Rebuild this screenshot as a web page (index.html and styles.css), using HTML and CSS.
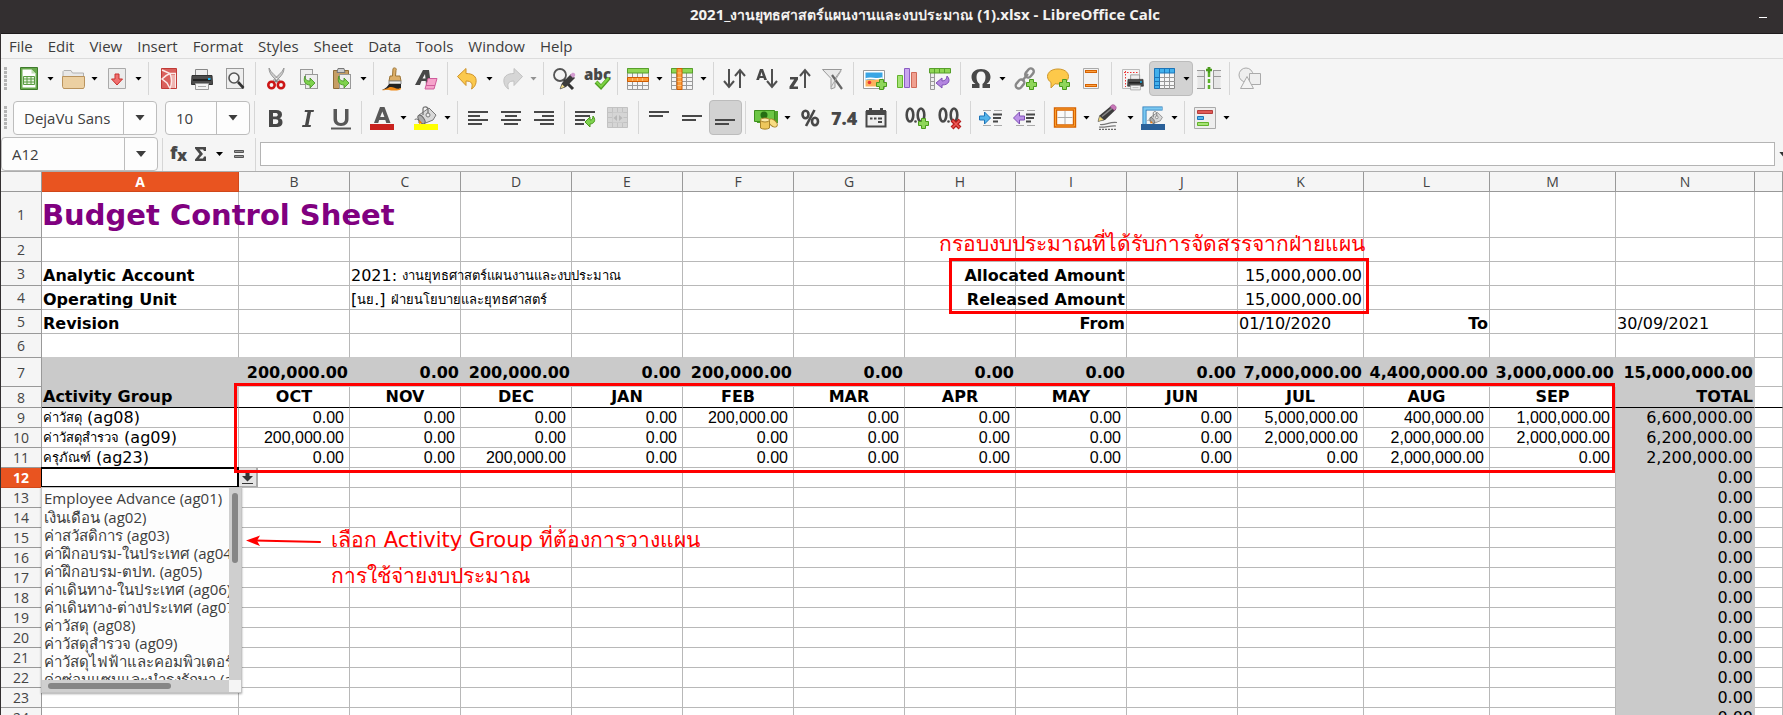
FILE: index.html
```html
<!DOCTYPE html>
<html lang="th">
<head>
<meta charset="utf-8">
<title>2021_งานยุทธศาสตร์แผนงานและงบประมาณ (1).xlsx - LibreOffice Calc</title>
<link rel="stylesheet" href="styles.css">
</head>
<body>
<div class="window">
  <header class="titlebar">
    <h1 class="title">2021_<span class="thai">งานยุทธศาสตร์แผนงานและงบประมาณ</span> (1).xlsx - LibreOffice Calc</h1>
    <button class="minimize" aria-label="Minimize"></button>
  </header>

  <nav class="menubar">
    <button>File</button><button>Edit</button><button>View</button><button>Insert</button><button>Format</button><button>Styles</button><button>Sheet</button><button>Data</button><button>Tools</button><button>Window</button><button>Help</button>
  </nav>

  <div class="toolbar" id="standard-bar" role="toolbar" aria-label="Standard"></div>

  <div class="toolbar" role="toolbar" aria-label="Formatting">
    <span class="grip"></span>
    <span class="combo combo-font"><select aria-label="Font name"><option>DejaVu Sans</option></select><i class="combo-arrow"></i></span>
    <span class="combo combo-size"><select aria-label="Font size"><option>10</option></select><i class="combo-arrow"></i></span>
    <span class="tools" id="format-bar"></span>
  </div>

  <div class="formulabar">
    <span class="combo combo-name"><input aria-label="Name box" value="A12"><i class="combo-arrow"></i></span>
    <span class="sep"></span>
    <button class="fn" aria-label="Function wizard"><svg width="22" height="22" viewBox="0 0 22 22"><text x="1" y="16" class="glyph" font-size="18">f</text><text x="8" y="18" class="glyph" font-size="16">x</text></svg></button>
    <button class="fn fn-menu" aria-label="Select function"><svg width="20" height="22" viewBox="0 0 20 22"><path d="M4 4h11v4h-2l-1-1.500H8.500L12 11l-4 4.500h4l1-2h2V18H4v-1.500L8.500 11 4 5.500z" fill="#484848"/></svg><i class="caret"></i></button>
    <button class="fn" aria-label="Formula"><svg width="14" height="22" viewBox="0 0 14 22"><path d="M2.500 7.500h9v2h-9zM2.500 12.500h9v2h-9z" fill="#999" stroke="#555"/></svg></button>
    <span class="sep"></span>
    <input class="formula-input" aria-label="Input line">
    <button class="expand" aria-label="Expand formula bar"></button>
  </div>

  <main class="sheet">
    <table class="grid" id="grid"></table>

    <div class="cell-cursor"></div>
    <button class="cell-drop" aria-label="Show selection list"><svg width="19" height="19" viewBox="0 0 19 19"><path d="M6.500 2h4v6H14l-5.500 5.500L3 8h3.500z" fill="#333"/><path d="M3 15.500h11" stroke="#333"/></svg></button>
    <div class="picker">
      <select size="11" aria-label="Activity Group">
        <option>Employee Advance (ag01)</option>
        <option>เงินเดือน (ag02)</option>
        <option>ค่าสวัสดิการ (ag03)</option>
        <option>ค่าฝึกอบรม-ในประเทศ (ag04)</option>
        <option>ค่าฝึกอบรม-ตปท. (ag05)</option>
        <option>ค่าเดินทาง-ในประเทศ (ag06)</option>
        <option>ค่าเดินทาง-ต่างประเทศ (ag07)</option>
        <option>ค่าวัสดุ (ag08)</option>
        <option>ค่าวัสดุสำรวจ (ag09)</option>
        <option>ค่าวัสดุไฟฟ้าและคอมพิวเตอร์ (ag10)</option>
        <option>ค่าซ่อมแซมและบำรุงรักษา (ag11)</option>
      </select>
      <span class="track-v"><i></i></span>
      <span class="track-h"><i></i></span>
    </div>

    <div class="frame frame-amounts"></div>
    <div class="frame frame-months"></div>
    <p class="note note-budget">กรอบงบประมาณที่ได้รับการจัดสรรจากฝ่ายแผน</p>
    <p class="note note-group">เลือก Activity Group ที่ต้องการวางแผน<br>การใช้จ่ายงบประมาณ</p>
    <svg class="note-arrow" width="78" height="14" viewBox="0 0 78 14"><path d="M75 8L10 6.500" stroke="#f00" stroke-width="2.200" stroke-linecap="round"/><path d="M1 6.500L15 1.500 12 6.700l3 5.300z" fill="#f00"/></svg>
  </main>
</div>
<script src="script.js"></script>
</body>
</html>
```
FILE: styles.css
```css
* { box-sizing: border-box; }

body {
  margin: 0;
  font-family: "Open Sans", "Noto Sans", sans-serif;
  font-size: 15px;
  color: #3d3d3d;
  background: #f5f5f5;
}

button, input, select { font: inherit; color: inherit; }
button { border: 0; background: none; padding: 0; }

.window {
  display: flex;
  flex-direction: column;
  height: 100vh;
  overflow: hidden;
  border-left: 1px solid #332f30;
}

.titlebar {
  display: flex;
  align-items: center;
  justify-content: center;
  position: relative;
  flex: none;
  height: 34px;
  padding-bottom: 4px;
  background: #332f30;
  border-bottom: 1px solid #1e1b1c;
}
.title { margin: 0; padding-left: 66px; font-size: 15px; line-height: 20px; font-weight: 700; color: #f4f2f0; white-space: nowrap; }
.title .thai { font-size: 14px; }
.minimize { position: absolute; right: 16px; top: 17px; width: 8px; height: 1px; background: #fff; }

.menubar {
  display: flex;
  flex: none;
  gap: 15px;
  height: 25px;
  padding: 0 8px;
  border-bottom: 1px solid #dcdcdc;
}

.toolbar, .tools { display: flex; align-items: center; flex: none; }
.toolbar { height: 39px; padding-left: 3px; }
.grip {
  width: 3px;
  height: 24px;
  margin-right: 6px;
  background: repeating-linear-gradient(#b4b4b4 0 3px, transparent 3px 4px);
}
.tool { display: flex; align-items: center; width: 33px; height: 35px; padding-left: 4px; border-radius: 4px; }
.tool.menu { width: 44px; }
.tool svg { flex: none; display: block; overflow: visible; }
.tool.on { background: #d2d2d2; border: 1px solid #bcbcbc; padding-left: 3px; }
.tool:disabled { opacity: .4; }
.caret { flex: none; width: 7px; height: 4px; margin-left: 6px; background: #000; clip-path: polygon(0 0, 100% 0, 50% 100%); }
.sep { flex: none; width: 1px; height: 33px; margin: 0 4px 0 3px; background: #d6d6d6; }
.glyph { font-family: "Open Sans", sans-serif; font-weight: 800; fill: #484848; }

.combo {
  display: flex;
  align-items: stretch;
  position: relative;
  flex: none;
  height: 34px;
  border: 1px solid #bdbdbd;
  border-radius: 4px;
  background: #fdfdfd;
}
.combo select, .combo input { flex: 1; min-width: 0; appearance: none; border: 0; background: none; padding: 0 10px; outline: 0; }
.combo-arrow { width: 33px; border-left: 1px solid #bdbdbd; display: grid; place-items: center; }
.combo-arrow::after { content: ""; width: 10px; height: 6px; background: #3d3d3d; clip-path: polygon(0 0, 100% 0, 50% 100%); }
.combo-font { width: 144px; margin-right: 8px; }
.combo-size { width: 85px; margin-right: 1px; }
.combo-name { width: 157px; margin-right: 1px; }

.formulabar { display: flex; align-items: center; flex: none; height: 34px; overflow: hidden; }
.fn { display: flex; align-items: center; margin-left: 2px; }
.fn-menu { margin-right: 4px; margin-left: 0; }
.fn-menu .caret { margin-left: 5px; }
.fn-menu + .fn { margin: 0 6px 0 5px; }
.formula-input { flex: 1; min-width: 0; height: 24px; border: 1px solid #b4b4b4; background: #fff; padding: 0 4px; }
.expand { width: 4px; height: 5px; margin-left: 4px; background: #333; clip-path: polygon(0 0, 100% 0, 100% 100%); }

.sheet { position: relative; flex: 1; min-height: 0; background: #fff; border-top: 1px solid #adadad; overflow: hidden; font-family: "DejaVu Sans", sans-serif; font-size: 16px; color: #000; }

.grid { width: 100%; table-layout: fixed; border-collapse: separate; border-spacing: 0; }
.grid th, .grid td { padding: 0; border: 0 solid #b8b8b8; border-width: 0 1px 1px 0; line-height: 19px; white-space: nowrap; }
.grid th { font-family: "Open Sans", sans-serif; font-size: 14px; font-weight: 400; color: #444; background: #f5f5f5; border-color: #999; }
.grid thead th { height: 20px; }
.grid .picked { background: #e95420; color: #fff; font-weight: 700; border-color: #d0481a; }
.grid .c-head { width: 41px; }
.grid .c-a { width: 197px; }
.grid .c-month { width: 111px; }
.grid .c-wide { width: 126px; }
.grid .c-total { width: 139px; }

.grid td { vertical-align: bottom; }
.grid tr { height: 20px; }
.grid .r-title { height: 46px; }
.grid .r-title td { vertical-align: middle; font-size: 29px; line-height: 34px; font-weight: 700; color: #800080; }
.grid .r-info { height: 24px; }
.grid .r-sum { height: 29px; }
.grid .r-sum td { vertical-align: middle; }
.grid .r-head { height: 21px; }
.grid .r-head td { vertical-align: top; border-bottom-color: #000; }
.grid td.shade { background: #cacaca; border-right-color: #cacaca; border-bottom-color: #cacaca; }
.grid .r-head td.shade { border-bottom-color: #000; }
.grid .before-shade { border-bottom-color: #cacaca; }

.v { display: flex; height: 19px; padding: 0 1px; white-space: pre; }
.r-title .v { height: 34px; padding: 0; }
.v.b { font-weight: 700; }
.v.r { justify-content: flex-end; }
.v.c { justify-content: center; }
.v.n { justify-content: flex-end; padding-right: 5px; font-family: "Liberation Sans", sans-serif; }
.v .thai { font-family: Norasi, Kinnari, "Liberation Serif", serif; font-size: 13px; }

.cell-cursor { position: absolute; left: 40px; top: 295px; width: 198px; height: 21px; border: 2px solid #000; border-left-width: 1px; }
.cell-drop { position: absolute; left: 238px; top: 296px; width: 19px; height: 19px; background: #e4e4e4; border-right: 2px solid #a9a9a9; border-bottom: 1px solid #a9a9a9; }
.cell-drop svg { display: block; }

.picker {
  position: absolute;
  left: 40px;
  top: 315px;
  width: 201px;
  height: 206px;
  display: grid;
  grid-template: 1fr 12px / 1fr 12px;
  border: 1px solid #c4c4c4;
  background: #f5f5f5;
  box-shadow: 0 1px 2px rgba(0, 0, 0, .35);
}
.picker select {
  min-width: 0;
  width: 100%;
  height: 100%;
  min-height: 0;
  border: 0;
  padding: 0;
  outline: 0;
  overflow: hidden;
  background: #fdfdfd;
  font-family: "Open Sans", sans-serif;
  font-size: 15px;
  color: #3d3d3d;
  scrollbar-width: none;
}
.picker option { height: 18px; min-height: 18px; line-height: 17px; padding: 0 2px; }
.track-v, .track-h { background: #cfcfcf; }
.track-v { padding: 5px 3px; }
.track-h { padding: 3px 6px; }
.track-v i, .track-h i { display: block; background: #868686; border-radius: 3px; }
.track-v i { width: 6px; height: 70px; }
.track-h i { width: 123px; height: 6px; }

.frame { position: absolute; border: 3px solid #f00; pointer-events: none; }
.frame-amounts { left: 948px; top: 86px; width: 420px; height: 56px; }
.frame-months { left: 233px; top: 211px; width: 1381px; height: 90px; }
.note { position: absolute; margin: 0; color: #f00; font-size: 21px; line-height: 36px; white-space: nowrap; }
.note-budget { left: 938px; top: 54px; }
.note-group { left: 330px; top: 350px; }
.note-arrow { position: absolute; left: 244px; top: 362px; }
```
FILE: script.js
```js
const plus = (x, y) => `<path d="M${x + 3.5} ${y + .5}h4v3h3v4h-3v3h-4v-3h-3v-4h3z" fill="#8fd65a" stroke="#4a9a1c"/>`;
const lines = (rows) => `<path d="${rows.map(([x, y, w]) => `M${x} ${y}h${w}`).join("")}" stroke="#484848" stroke-width="2"/>`;
const mesh = (extra) => `<path d="M1.500 1.500h21v21h-21z" fill="#f4f4f4" stroke="#999"/><path d="M6.500 6v16M11.500 6v16M16.500 6v16M2 10.500h20M2 14.500h20M2 18.500h20" stroke="#999"/><path d="M1.500 1.500h21v4.500h-21z" fill="#8fd654" stroke="#57a02b"/>${extra}`;
const printer = `<path d="M5.500 2.500h12v7h-12z" fill="#eee" stroke="#888"/><path d="M2 8.500h20l.5 9H1.500z" fill="#4c4c4c" stroke="#333"/><path d="M3 13h18" stroke="#222" stroke-width="2"/><path d="M5.500 16.500h13v6h-13z" fill="#f3f3f3" stroke="#999"/><path d="M8 19.500h8" stroke="#aaa"/><path d="M18 11h2.500v2H18z" fill="#1cb4f0"/>`;
const page = (x, y, w, h) => `<rect x="${x}" y="${y}" width="${w}" height="${h}" fill="#eee" stroke="#999"/>`;
const curl = `<path d="M11 10c0 4 2 5 5 5v-3l5 5-5 5v-3c-5 0-7-4-5-9z" fill="#7ed24e" stroke="#3f8f1c" stroke-width=".8"/>`;
const zeros = `<ellipse cx="5" cy="9" rx="3.300" ry="6.500" fill="none" stroke="#484848" stroke-width="2.600"/><ellipse cx="16" cy="9" rx="3.300" ry="6.500" fill="none" stroke="#484848" stroke-width="2.600"/><circle cx="10.500" cy="15.500" r="1.300" fill="#484848"/>`;
const arrowDown = (x) => `<path d="M${x} 2v18M${x - 5} 14l5 6 5-6" fill="none" stroke="#505050" stroke-width="2"/>`;
const arrowUp = (x) => `<path d="M${x} 21V3M${x - 5} 9l5-6 5 6" fill="none" stroke="#505050" stroke-width="2"/>`;
const back = `<path d="M1.500 9.500L10 1.500v5c7 0 11 3 10 9-.5 3-2 5-4.500 6.500 1.500-5 .5-8-5.500-8v4.500z" fill="#fbc94d" stroke="#cf932a"/>`;
const bucket = `<path d="M5 9l10-7 7 7-3 5-10 4z" fill="#d8d8d8" stroke="#777"/><ellipse cx="7.500" cy="13.500" rx="2.500" ry="5" transform="rotate(-35 7.500 13.500)" fill="#aaa" stroke="#666"/><path d="M9 9V3c0-3 5-3 5 1v4" fill="none" stroke="#777" stroke-width="1.300"/><circle cx="14" cy="9" r="2" fill="#eee" stroke="#777"/><path d="M5 17c0-4-3-5-4.500-3" stroke="#666" fill="none"/><path d="M5.500 14l2.500 3-3 1z" fill="#f57900"/>`;

const icons = {
  create: `<path d="M3.500.5h17v22h-17z" fill="#67a84c" stroke="#3e7a2b"/><path d="M5.500 2.500h9l4 4v14h-13z" fill="#fff"/><path d="M14.500 2.500v4h4z" fill="#c2dfb4"/><path d="M6.500 9.500h11v8h-11zM6.500 12h11M6.500 15h11M10 9.500v8M14 9.500v8" fill="#e7f4e0" stroke="#5b9c42"/>`,
  open: `<path d="M2 14V4.500l1-1h7l1.500 2.500h11V14z" fill="#e8e8e8" stroke="#b0b0b0"/><path d="M1.500 9.500h22v10l-1 2h-20l-1-2z" fill="#ecd0a2" stroke="#b9935d"/>`,
  save: `<path d="M3.500 1.500h17v20h-17z" fill="#ececec" stroke="#aaa"/><path d="M10 7h4v5h3.500L12 18l-5.500-6H10z" fill="#ef7070" stroke="#c9302c"/>`,
  pdf: `<path d="M4.500 1.500h15v20h-15z" fill="#d9605c" stroke="#c03a36"/><path d="M14 8h4v13h-4c1-4 1-9 0-13z" fill="#efb4b0"/><path d="M5 3l8 3.500c2 5 2 10 0 15M19 6.500l-6 0C9 8 7 10 5 12l5 4 3 5.500" fill="none" stroke="#fbe9e8" stroke-width="1.500"/><path d="M18.500 7v14" stroke="#fbe9e8"/>`,
  print: printer,
  preview: page(3.500, 1.500, 17, 20) + `<circle cx="11" cy="11" r="5" fill="#f4f4f4" stroke="#555" stroke-width="1.600"/><path d="M15 15l5.500 6" stroke="#333" stroke-width="2.600"/>`,
  cut: `<path d="M5 1c0 6 4 9 9 14l2-1.500C12 9 7 6 5 1zM20 1c0 6-4 9-9 14l-2-1.500C13 9 18 6 20 1z" fill="#ccc" stroke="#888" stroke-width=".8"/><g fill="none" stroke="#cc1616" stroke-width="2.600"><circle cx="7.500" cy="18" r="3.200"/><circle cx="17" cy="18" r="3.200"/></g><circle cx="12.200" cy="14" r="1.500" fill="#888"/>`,
  copy: page(3.500, 2.500, 12, 15) + page(8.500, 7.500, 12, 14) + `<g transform="translate(-3 -1)">${curl}</g>`,
  paste: `<path d="M3.500 3.500h15v18h-15z" fill="#c69e64" stroke="#8e6c3a"/><path d="M8 1.500h6l1 4H7z" fill="#ccc" stroke="#777"/>` + page(9.500, 7.500, 11, 14) + `<g transform="translate(-2 -1)">${curl}</g>`,
  brush: `<path d="M11 1.500c2-1.500 4 0 3 2l-.5 5.500H18l1 5H7l1-5h2.500z" fill="#dcae68" stroke="#9c7435"/><path d="M7 14h12v3H7z" fill="#eee" stroke="#888"/><path d="M7 17h12v4c-5 3-12 0-19 2 4-2 5-3 7-6z" fill="#222"/><path d="M0 23c6-1 6-3 9-3s6 3 10 1c1 3-9 3-12 2s-5 1-7 0z" fill="#f08a18"/>`,
  clear: `<path d="M8 3h6l2 15h-5l-.3-4H6.500L5 18H0zm2 4l-2.500 4.500h3z" fill="#484848"/><path d="M13 11.500h9l-3 10.500h-9z" fill="#f6a3cb" stroke="#cf5c9c"/><path d="M11 18.500h9" stroke="#cf5c9c"/>`,
  undo: back,
  redo: `<g transform="matrix(-1 0 0 1 24 0)"><path d="M1.500 9.500L10 1.500v5c7 0 11 3 10 9-.5 3-2 5-4.500 6.500 1.500-5 .5-8-5.500-8v4.500z" fill="#aaa" stroke="#777"/></g>`,
  find: `<circle cx="8" cy="8" r="6" fill="#f4f4f4" stroke="#555" stroke-width="1.800"/><path d="M12 13l9 9" stroke="#333" stroke-width="3"/><path d="M8 22l2-6 9-9 4 4-9 9z" fill="#3c3c3c"/><path d="M8 22l2-5 3 3z" fill="#f5e08a" stroke="#555" stroke-width=".6"/><path d="M18 8l2-2c2-1 4 1 3 3l-2 2z" fill="#d39bd0"/>`,
  spell: `<text x="-1" y="13" class="glyph" font-size="15">abc</text><path d="M11 15l5 5 8-9" fill="none" stroke="#4f9f22" stroke-width="4"/><path d="M11.500 15l4.500 4.500 7.500-8.500" fill="none" stroke="#7ed243" stroke-width="2"/>`,
  row: mesh(`<path d="M1.500 10.500h21v4h-21z" fill="#fb9a38" stroke="#d05c00"/><path d="M6.500 11v3M11.500 11v3M16.500 11v3" stroke="#fcc078"/>`),
  col: mesh(`<path d="M7 1.500h5v21H7z" fill="#fb9a38" stroke="#d05c00"/><path d="M7.500 6h4M7.500 10.500h4M7.500 14.500h4M7.500 18.500h4" stroke="#fcc078"/>`),
  sort: arrowDown(7) + arrowUp(18),
  asc: `<path d="M5 2h3l4 11H9.200l-.7-2H4.700L4 13H1.200zM6.500 5L5.400 9h2.300z" fill="#484848"/>` + arrowDown(17),
  desc: `<path d="M2 10h8v2.500L5.500 19.500H10V22H1.500v-2.500L6.200 12.500H2z" fill="#484848"/>` + arrowUp(17),
  filter: `<path d="M1.500 2.500h19l-6.500 9v9l-4 1.500V11.500z" fill="#e8e8e8" stroke="#999"/><path d="M11 8L21 22" stroke="#666" stroke-width="2.200"/><path d="M20 4l-10 16" stroke="#aaa"/>`,
  image: `<path d="M1.500 3.500h21v18h-21z" fill="#fff" stroke="#999"/><path d="M3.500 5.500h17v8h-17z" fill="#3aa5e4"/><path d="M3.500 13.500c4-2 8 0 10-1s4 0 7 0v7h-17z" fill="#fbb25c"/><path d="M3.500 12c5-2 11 1 17-1" stroke="#fff" stroke-width="1.500" fill="none"/><circle cx="7.500" cy="15.500" r="1.800" fill="#e33"/>` + plus(14, 12),
  chart: `<path d="M2.500 8.500h5v12h-5z" fill="#a6e376" stroke="#62b32b"/><path d="M9.500 1.500h5v19h-5z" fill="#c9a5ee" stroke="#8b5cc4"/><path d="M16.500 5.500h5v15h-5z" fill="#f0a090" stroke="#cf6a58"/>`,
  pivot: `<path d="M2.500 2.500h4v20h-4zM2.500 10.500h4M2.500 14.500h4M2.500 18.500h4" fill="#eee" stroke="#999"/><path d="M1.500 1.500h21v4.500h-21zM6.500 2v4M11.500 2v4M16.500 2v4" fill="#8fd654" stroke="#57a02b"/><path d="M19 9c4 4 2 9-5 9v3l-6-5 6-5v3c3 0 5-2 5-5z" fill="#b385e0" stroke="#7e4fb5"/>`,
  omega: `<path d="M3 21v-4h3.500C3.500 15 2.500 12.500 2.500 10c0-5 4-8 9.500-8s9.500 3 9.500 8c0 2.500-1 5-4 7H21v4h-7.500v-4c2-1.500 3-3.500 3-7s-1.500-5.500-4.500-5.500S7.500 6.500 7.500 10s1 5.500 3 7v4z" fill="#484848"/>`,
  link: `<g fill="none" stroke="#888" stroke-width="2.400"><rect x="11.500" y="3" width="10" height="6" rx="3" transform="rotate(-50 16.500 6)"/><rect x="2" y="14" width="10" height="6" rx="3" transform="rotate(-50 7 17)"/><path d="M9 14l6-7"/></g>` + plus(13, 12),
  comment: `<path d="M12 2c6 0 10.500 3 10.500 7.500S18 17 12 17c-1 0-2 0-3-.3L5 21v-5.500C3 14 1.500 12 1.500 9.500 1.500 5 6 2 12 2z" fill="#fdc94a" stroke="#ce962a"/>` + plus(13, 12),
  headfoot: `<path d="M4.500 1.500h15v20h-15z" fill="#f2f2f2" stroke="#aaa"/><path d="M6 4.500h12M6 18.500h12" stroke="#d66200" stroke-width="3"/><path d="M7 4.500h10M7 18.500h10" stroke="#fba040"/>`,
  printarea: `<path d="M2.500 2.500h17v19h-17z" fill="#f5f5f5" stroke="#bbb"/><path d="M4 5.500h14M5.500 4v16" stroke="#e33" stroke-dasharray="1.500 1.500"/><g transform="translate(6.500 6) scale(.75)">${printer}</g>`,
  freeze: `<path d="M1.500 1.500h20v20h-20z" fill="#f6f6f6" stroke="#888"/><path d="M6.500 6v16M11.500 6v16M16.500 6v16M6 10.500h16M6 14.500h16M6 18.500h16" stroke="#999"/><path d="M1.500 1.500h20v4.500h-15v15.500h-5z" fill="#42b0ec" stroke="#1c74b8"/><path d="M6.500 2v4M11.500 2v4M16.500 2v4M2 10.500h4M2 14.500h4M2 18.500h4" stroke="#1c74b8"/>`,
  split: `<path d="M.5 3.500h7v18h-7zM16.500 3.500h7v18h-7z" fill="#e6e6e6"/><path d="M0 3.500h8M0 9.500h8M0 21.500h8M16 3.500h8M16 9.500h8M16 21.500h8M7.500 3v19M16.500 3v19" stroke="#999"/><path d="M12 0v24" stroke="#5bb02a" stroke-width="2.500" stroke-dasharray="4 2"/><path d="M9 3h6M12 0v6" stroke="#4a9a1c" stroke-width="2.500"/>`,
  shapes: `<circle cx="8" cy="8" r="7" fill="#eee" stroke="#aaa"/><path d="M11.500 6.500h11v11h-11z" fill="#eee" stroke="#aaa"/><path d="M9 9.500l6.500 12h-13z" fill="#f4f4f4" stroke="#aaa"/>`,

  bold: `<path fill-rule="evenodd" d="M6 4h7c4 0 6 1.500 6 4.500 0 2-1 3.200-2.500 3.700 2 .5 3 1.800 3 4 0 3.300-2.500 4.800-6 4.800H6zm4 3v3.500h2.500c1.500 0 2.300-.6 2.300-1.800S14 7 12.500 7zm0 6.300V18h3c1.500 0 2.300-.8 2.300-2.400s-.8-2.300-2.500-2.300z" fill="#484848"/>`,
  italic: `<path d="M9 4h9l-.4 2H15l-2.500 13H15l-.4 2H6l.4-2H9l2.500-13H8.600z" fill="#484848"/>`,
  underline: `<path d="M4.500 3h3.500v10c0 2.500 1.500 4 4 4s4-1.500 4-4V3h3.500v10c0 4-2.500 7-7.500 7s-7.500-3-7.500-7z" fill="#585858"/><path d="M2 22.500h20" stroke="#585858" stroke-width="2"/>`,
  fontcolor: `<path fill-rule="evenodd" d="M10 1h4.500l6 16h-4.200l-1-3H9.200l-1 3H4zm2.300 4.500L10.200 11h4.200z" fill="#585858"/><path d="M0 18h24v6H0z" fill="#c9211e"/>`,
  fill: bucket + `<path d="M0 18h24v6H0z" fill="#ff0"/>`,
  left: lines([[2, 6, 20], [2, 10, 12], [2, 14, 20], [2, 18, 14]]),
  center: lines([[2, 6, 20], [6, 10, 12], [2, 14, 20], [5, 18, 14]]),
  right: lines([[2, 6, 20], [10, 10, 12], [2, 14, 20], [8, 18, 14]]),
  wrap: lines([[2, 6, 20], [2, 10, 15], [2, 14, 10], [2, 18, 9]]) + `<path d="M20 10c4 5 0 8-3 8v3l-5-5 5-5v3c2 0 3-1 3-4z" fill="#7ed24e" stroke="#4a9a1c"/>`,
  merge: `<g opacity=".55"><path d="M1.500 1.500h20v20h-20z" fill="#bbb" stroke="#999"/><path d="M6.500 2v19M11.500 2v5M11.500 17v4M16.500 2v19M2 6.500h19M2 16.500h19M2 11.500h4M17 11.500h4" stroke="#999"/><path d="M6.500 6.500h11v10h-11z" fill="#bbb"/><path d="M11 9v6l-3.500-3zM13 9v6l3.500-3z" fill="#888"/></g>`,
  top: lines([[2, 6, 20], [2, 10, 14]]),
  middle: lines([[2, 10, 20], [2, 14, 14]]),
  bottom: lines([[2, 14, 20], [2, 18, 14]]),
  currency: `<path d="M2 5h22v12H3z" fill="#4ea32a"/><path d="M.5 4.500h20v11H.5z" fill="#6cc644" stroke="#3d8f1d"/><circle cx="10" cy="9" r="3.500" fill="#256e12"/><ellipse cx="19" cy="17" rx="5" ry="3" transform="rotate(40 19 17)" fill="#f8dd83" stroke="#a8842a"/><path d="M6.500 14h9v8c-2 1.500-7 1.500-9 0z" fill="#eec75c" stroke="#a8842a"/><ellipse cx="11" cy="14" rx="4.500" ry="2" fill="#fbe9a8" stroke="#a8842a"/>`,
  percent: `<g fill="none" stroke="#484848" stroke-width="2.600"><ellipse cx="7.500" cy="8.500" rx="3" ry="3.700"/><ellipse cx="17" cy="15.500" rx="3" ry="3.700"/><path d="M16.500 4L8 20"/></g>`,
  number: `<text x="0" y="19" class="glyph" font-size="18">7.4</text>`,
  date: `<path d="M2.500 6h19v14.500h-19z" fill="#eee" stroke="#484848" stroke-width="2"/><path d="M2 4h20v5H2z" fill="#484848"/><path d="M5 2h3v4H5zM16 2h3v4h-3z" fill="#484848"/><path d="M6 12.500h2.500M10 12.500h2.500M14 12.500h4M14 16h4" stroke="#484848" stroke-width="2"/>`,
  adddec: zeros + plus(13, 12),
  deldec: zeros + `<path d="M14 14l8 8M22 14l-8 8" stroke="#b51b1b" stroke-width="4"/><path d="M14.500 14.500l7 7M21.500 14.500l-7 7" stroke="#ef5a55" stroke-width="1.500"/>`,
  indent: `<path d="M4 4.500h8M15 4.500h8M4 19.500h8M15 19.500h8" stroke="#aaa"/><path d="M14 8.500h9M14 12h8M14 15.500h5" stroke="#484848" stroke-width="2"/><path d="M.5 10h5V6l6 6-6 6v-4h-5z" fill="#54b4ea" stroke="#1c74b8"/>`,
  outdent: `<path d="M4 4.500h8M15 4.500h8M4 19.500h8M15 19.500h8" stroke="#aaa"/><path d="M14 8.500h9M14 12h8M14 15.500h5" stroke="#484848" stroke-width="2"/><path d="M12.500 10h-5V6l-6 6 6 6v-4h5z" fill="#bd92e8" stroke="#7e4fb5"/>`,
  borders: `<path d="M2.500 3h19v17h-19z" fill="#fafafa" stroke="#d66200" stroke-width="3.400"/><path d="M2.500 3h19v17h-19z" fill="none" stroke="#fba030"/><path d="M12 5v13M4.500 11.500h15" stroke="#aaa"/>`,
  linestyle: `<path d="M1 15.500l1.500-6L14 0l5 3.500L8 14z" fill="#3c3c3c"/><path d="M5 10.500L15.500 1.800" stroke="#888" stroke-width="1.500"/><path d="M1 15.500l1.500-5.500 4.500 4z" fill="#f0d878" stroke="#666" stroke-width=".6"/><path d="M13 .8l1.500-1.600c2-1.600 5.500 1 4.500 3.500L17.500 4.500z" fill="#c877b8" stroke="#96508a" stroke-width=".6"/><path d="M3 18.500c6 1 9-3 17-2M2 21c6 1 10-1.500 17-1" fill="none" stroke="#777" stroke-width="1.200"/><path d="M2 23.300h17" stroke="#444" stroke-dasharray="2 1"/>`,
  bordercolor: `<path d="M3.500 18V2.500h18" fill="none" stroke="#1c74b8" stroke-width="4"/><path d="M3.500 18V2.500h17.500" fill="none" stroke="#7cc8f0" stroke-width="2.400"/><g transform="translate(6 5) scale(.7)">${bucket}</g><path d="M0 18h24v6H0z" fill="#2a6099"/>`,
  condition: `<path d="M1.500 1.500h21v21h-21z" fill="#eee" stroke="#aaa"/><path d="M4.500 4.500h15v3h-15z" fill="#e05a57" stroke="#b53c3a"/><path d="M4.500 10.500h6v3h-6z" fill="#54b4ea" stroke="#1c74b8"/><path d="M4.500 16.500h11v3h-11z" fill="#a6e376" stroke="#62b32b"/>`
};

/* "|" is a separator, "+" adds a drop-down caret, "*" marks a pressed button, "!" a disabled one */
const tools = (spec) => spec.split(" ").map((t) => {
  if (t === "|") return '<span class="sep"></span>';
  const name = t.replace(/[+*!]/g, "");
  const cls = "tool" + (t.includes("+") ? " menu" : "") + (t.includes("*") ? " on" : "");
  return `<button class="${cls}" aria-label="${name}"${t.includes("!") ? " disabled" : ""}><svg width="24" height="24" viewBox="0 0 24 24">${icons[name]}</svg>${t.includes("+") ? '<i class="caret"></i>' : ""}</button>`;
}).join("");

document.getElementById("standard-bar").innerHTML = '<span class="grip"></span>' +
  tools("create+ open+ save+ | pdf print preview | cut copy paste+ | brush clear | undo+ redo+! | find spell | row+ col+ | sort asc desc filter | image chart pivot | omega+ link comment headfoot | printarea freeze+* split | shapes");
document.getElementById("format-bar").innerHTML =
  tools("| bold italic underline | fontcolor+ fill+ | left center right | wrap merge | top middle bottom* | currency+ percent number date | adddec deldec | indent outdent | borders+ linestyle+ bordercolor+ | condition+");

const letters = "ABCDEFGHIJKLMN".split("");
const months = ["OCT", "NOV", "DEC", "JAN", "FEB", "MAR", "APR", "MAY", "JUN", "JUL", "AUG", "SEP"];
const cells = {
  A1: ["Budget Control Sheet", "b"],
  A3: ["Analytic Account", "b"], C3: ["2021: งานยุทธศาสตร์แผนงานและงบประมาณ", ""],
  I3: ["Allocated Amount", "b r"], K3: ["15,000,000.00", "r"],
  A4: ["Operating Unit", "b"], C4: ["[นย.] ฝ่ายนโยบายและยุทธศาสตร์", ""],
  I4: ["Released Amount", "b r"], K4: ["15,000,000.00", "r"],
  A5: ["Revision", "b"], I5: ["From", "b r"], K5: ["01/10/2020", ""], L5: ["To", "b r"], N5: ["30/09/2021", ""],
  A8: ["Activity Group", "b"], N8: ["TOTAL", "b r"],
  A9: ["ค่าวัสดุ (ag08)", ""], A10: ["ค่าวัสดุสำรวจ (ag09)", ""], A11: ["ครุภัณฑ์ (ag23)", ""],
  N9: ["6,600,000.00", "r"], N10: ["6,200,000.00", "r"], N11: ["2,200,000.00", "r"]
};
for (let r = 12; r <= 24; r++) cells["N" + r] = ["0.00", "r"];
const sums = ["200,000.00", "0.00", "200,000.00", "0.00", "200,000.00", "0.00", "0.00", "0.00", "0.00", "7,000,000.00", "4,400,000.00", "3,000,000.00", "15,000,000.00"];
sums.forEach((v, i) => { cells[letters[i + 1] + 7] = [v, "b r"]; });
const amounts = {
  F9: "200,000.00", K9: "5,000,000.00", L9: "400,000.00", M9: "1,000,000.00",
  B10: "200,000.00", K10: "2,000,000.00", L10: "2,000,000.00", M10: "2,000,000.00",
  D11: "200,000.00", L11: "2,000,000.00"
};
months.forEach((m, i) => {
  const col = letters[i + 1];
  cells[col + 8] = [m, "b c"];
  for (const r of [9, 10, 11]) cells[col + r] = [amounts[col + r] || "0.00", "n"];
});

/* Thai runs get their own face inside a cell */
const runs = (text) => text.replace(/[\u0E00-\u0E7F]+/g, '<span class="thai">$&</span>');

const rowClass = (r) => r === 1 ? "r-title" : r <= 6 ? "r-info" : r === 7 ? "r-sum" : r === 8 ? "r-head" : "";
let html = '<colgroup><col class="c-head"><col class="c-a">' + '<col class="c-month">'.repeat(9) + '<col class="c-wide">'.repeat(3) + '<col class="c-total"><col></colgroup>';
html += "<thead><tr><th></th>" + letters.map((l) => `<th scope="col"${l === "A" ? ' class="picked"' : ""}>${l}</th>`).join("") + "<th></th></tr></thead><tbody>";
for (let r = 1; r <= 24; r++) {
  html += `<tr class="${rowClass(r)}"><th scope="row"${r === 12 ? ' class="picked"' : ""}>${r}</th>`;
  for (const l of [...letters, ""]) {
    const shade = (r === 7 && l) || (r === 8 && l === "A") || (r > 7 && l === "N");
    const cls = shade ? "shade" : r === 6 && l ? "before-shade" : "";
    const c = l && cells[l + r];
    html += `<td class="${cls}">${c ? `<div class="v ${c[1]}">${runs(c[0])}</div>` : ""}</td>`;
  }
  html += "</tr>";
}
document.getElementById("grid").innerHTML = html + "</tbody>";
```
